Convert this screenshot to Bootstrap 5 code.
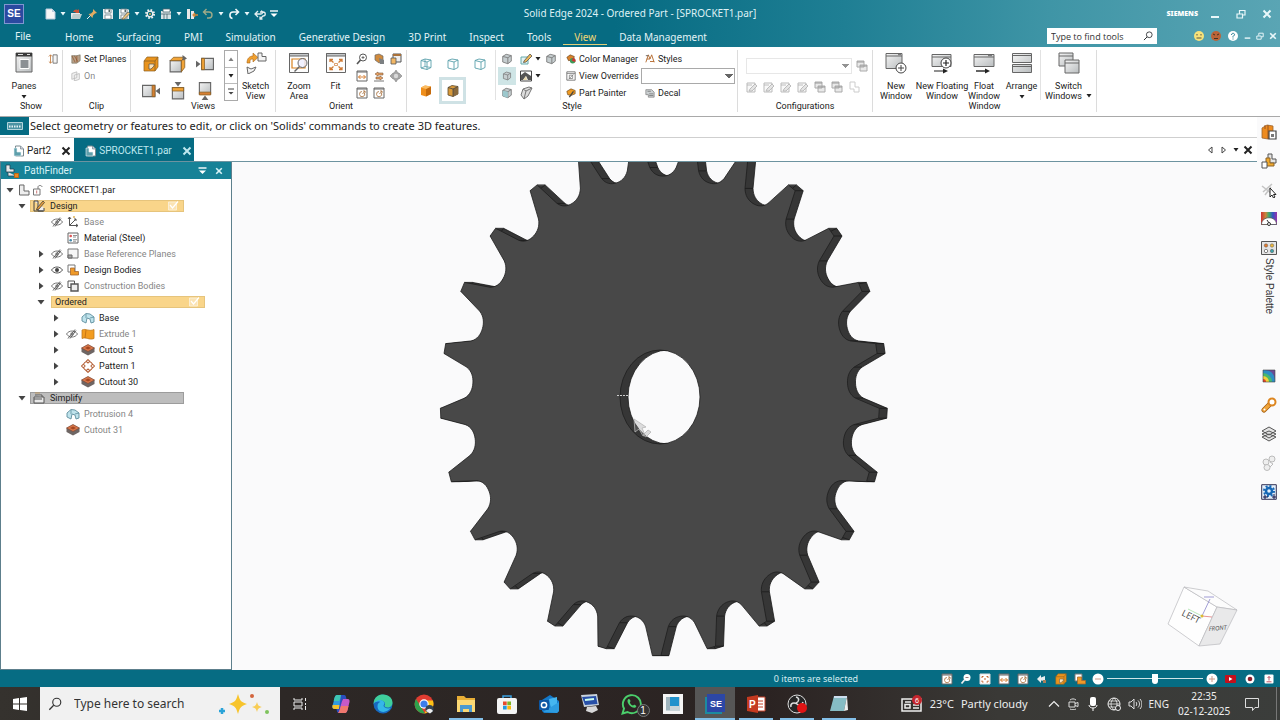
<!DOCTYPE html>
<html lang="en">
<head>
<meta charset="utf-8">
<meta name="viewport" content="width=device-width, initial-scale=1">
<title>Solid Edge 2024 - Ordered Part - [SPROCKET1.par]</title>
<link href="https://cdn.jsdelivr.net/npm/bootstrap@5.3.0/dist/css/bootstrap.min.css" rel="stylesheet">
<style>
:root{--teal:#066c83;--teal2:#178297;--line:#dcdcdc}
body{font-family:Roboto,"Open Sans",sans-serif;font-size:9px;line-height:12px;color:#222;background:#fff;height:100vh;overflow:hidden}
button{background:none;border:0;padding:0;color:inherit;font:inherit}
svg{display:block;flex:none}
.i10{width:10px;height:10px}.i12{width:12px;height:12px}.i14{width:14px;height:14px}.i16{width:16px;height:16px}.i18{width:18px;height:18px}.i22{width:22px;height:22px}
.dd{width:6px;height:4px}
.min0{min-width:0;min-height:0}
/* title and menu */
.app-head{background:linear-gradient(90deg,#066b82 0 48%,#1f7f94 66%,#3f95a6 82%,#5aa5b4);color:#e9f7fa;font-family:"Noto Sans",sans-serif}
.title-row{display:grid;grid-template-columns:1fr auto 1fr;height:26px}
.title-text{font-size:10px;line-height:27px;color:#dff1f5}
.se-logo{width:20px;height:20px;background:#2b4aa0;border:1px solid #7f97cf;color:#fff;font:bold 10px/18px "Liberation Sans",sans-serif}
.qat{gap:4px}
.siemens{font:900 7px/12px "Noto Sans",sans-serif;color:#fff;margin-right:-4px}
.menu-row{height:21px;font-size:10px}
.menu-nav{gap:23px;padding-left:15px}
.menu-row .nav-link{padding:0;color:#e3f4f7;line-height:23px}
.menu-row .file{margin-right:11px;line-height:21px}
.menu-row .active{color:#f2d675;border-bottom:1px solid #e3cf77;padding:0 11px;margin:0 -11px;height:19px}
.find-box{width:110px;height:16px;background:#fff;margin-top:2px}
.find-box input,.task-find input{font:inherit;color:#333;border:0;background:none;padding:0;min-width:0;outline:0}
.find-box input::placeholder,.task-find input::placeholder{color:#333;opacity:1}
.find-box input{font:9px "Open Sans",sans-serif}
.head-tools{gap:5px;padding:0 3px 2px 36px}
/* ribbon */
.ribbon{display:grid;grid-template-columns:63px 68px 145px 131px 331px 135px 224px;height:70px;padding-top:3px;border-bottom:1px solid #a9a9a9}
.rg{display:grid;grid-template-rows:50px 12px;height:62px;border-right:1px solid var(--line)}
.rg>.cap{text-align:center}
.rg>.rbody{display:flex;min-width:0}
.big{display:flex;flex-direction:column;align-items:center;text-align:center;line-height:10px;padding-top:2px;white-space:nowrap}
.big svg:first-child{margin-bottom:7px}
.lbl{display:flex;align-items:center;gap:3px;height:17px;white-space:nowrap;color:#222}
.g3{display:grid;grid-template-columns:repeat(3,27px);grid-template-rows:27px 27px;place-items:center}
.s3{display:grid;grid-template-columns:repeat(3,17px);grid-template-rows:repeat(3,17px);place-items:center}
.views3{margin-left:6px}.spin{width:14px;height:51px;border:1px solid #aaa;margin-left:6px}
.spin button{flex:1;display:flex;align-items:center;justify-content:center}
.spin button+button{border-top:1px solid #bbb}
.flip{transform:scaleY(-1)}
.sel{background:#cfe5e6}
.selbox{border:3px solid #cfe2e5;width:27px;height:27px;display:flex;align-items:center;justify-content:center}
.combo{width:100%;height:16px;border:1px solid #a9a9a9;background:#fff;font-size:9px;appearance:none;background-image:linear-gradient(45deg,transparent 50%,#666 50%),linear-gradient(-45deg,transparent 50%,#666 50%);background-size:4px 4px;background-position:right 5px top 5px,right 1px top 5px;background-repeat:no-repeat}
.combo.off{border-color:#ddd;opacity:.7}
.sep{border-right:1px solid #e2e2e2}
.panes{width:48px}.w46{width:46px}.w24{width:27px}.wfl{width:38px}
.box-c{padding:0 2px 0 5px}
.s3b{grid-template-columns:22px 15px 9px 18px}
.stylegrid{display:grid;grid-template-columns:75px 94px;grid-template-rows:repeat(3,17px);align-items:center;padding-left:5px}
.cfrow{gap:5px;padding-top:7px}
/* prompt and doc tabs */
.prompt{height:21px;border-bottom:1px solid #cfcfcf;font:11px/18px "Noto Sans",sans-serif;color:#222}
.prompt .tag{width:29px;height:18px;background:var(--teal)}
.ptxt{padding-left:1px}
.doc-tabs{height:24px;font-size:10px;border-bottom:1px solid #6d93a0}
.doc-tabs .tb{display:flex;align-items:center;height:23px;padding:2px 3px 0 13px;color:#222;gap:2px}
.doc-tabs .tb svg:last-child{margin-left:8px}
.doc-tabs .on{background:var(--teal);color:#bfe8ef;padding:2px 2px 0 11px}
/* PathFinder */
.finder{width:232px;border:1px solid #5d7f8c;border-top:0;background:#fff}
.finder-head{background:var(--teal2);height:17px;color:#d8f3f7;font-size:10px;line-height:16px}
.tree{padding-top:3px}
.tree li{display:flex;align-items:center;height:16px;padding-left:32px;white-space:nowrap}
.tree .s{width:16px;display:flex;justify-content:center;flex:none}
.tree .t{margin-left:3px}
.tree .dim{color:#858585}
.tree .kid{padding-left:47px}
.tree .root{padding-left:2px}.tree .root .s{width:14px}.tree .root .t{margin-left:5px}.tree .l1{padding-left:13px}
.band{background:#f9d58a;border:1px solid #e6c47c;height:12px;display:flex;align-items:center;width:154px;line-height:10px}
.band.ord{margin-left:2px}
.band.grey{background:#bdbdbd;border-color:#9c9c9c}
.view-area{background:#fafafb;min-width:0}
.dock{width:23px;background:#fafafb;color:#333;padding-top:1px}
.dock button{display:flex;flex-direction:column;align-items:center;padding-top:6px;min-height:29px;width:23px}
.dock span{writing-mode:vertical-rl;font:10px/12px "Liberation Sans",sans-serif;margin-top:2px}
/* status bar */
.status{background:var(--teal);height:17px;color:#d5edf1;font-size:9px}
.stxt{margin-right:83px}.sicons{gap:7px;margin-right:6px}.send{gap:9px;margin:0 2px 0 6px;align-items:center}
.status .stxt{font-family:"Noto Sans",sans-serif}
.status .zoom{width:96px;height:12px;appearance:none;background:linear-gradient(#cfe4e8,#cfe4e8) center/100% 1px no-repeat;margin:0 3px}
.zoom::-webkit-slider-thumb{appearance:none;width:6px;height:10px;background:#fff;border-radius:0 0 3px 3px}
/* task bar */
.tasks{height:33px;background:linear-gradient(90deg,#35322e 0,#2d2826 22%,#2b2322 60%,#3a3936 78%,#3b3d3b);color:#eee;font-family:"Noto Sans",sans-serif}
.startb{width:40px}
.task-find{width:240px;background:#f1f1f1;font-size:12px;color:#333}
.task-find input{width:144px}
.apps{width:579px}
.apps button{width:40px;height:33px;display:flex;align-items:center;justify-content:center;position:relative}
.apps .open::after{content:"";position:absolute;left:3px;right:3px;bottom:0;height:2px;background:#83bfe8}
.apps .cur{background:#565656}.apps .cur::after{left:0;right:0}
.apps .ct{position:absolute;right:2px;bottom:3px;width:13px;height:13px;border-radius:50%;background:#333;border:1px solid #777;font:10px/11px "Liberation Sans",sans-serif;color:#fff}
.wx{font-size:11px;gap:7px}
.tray{font-size:10px;gap:7px;margin:0 9px 0 20px}
.clock{font-size:10px;line-height:15px;width:52px;white-space:nowrap}
.note{margin:0 17px 0 15px}.desk{border-left:1px solid #777;width:4px}
</style>
</head>
<body class="d-flex flex-column">
<svg width="0" height="0" class="position-absolute" aria-hidden="true"><defs>
<linearGradient id="gw" x1="0" y1="0" x2="1" y2="1"><stop offset="0" stop-color="#f4f4f4"/><stop offset="1" stop-color="#b9bdbf"/></linearGradient>
<linearGradient id="rb" x1="0" y1="0" x2="1" y2="0"><stop offset="0" stop-color="#c33"/><stop offset=".3" stop-color="#c8883c"/><stop offset=".5" stop-color="#39a96e"/><stop offset=".75" stop-color="#3450c4"/><stop offset="1" stop-color="#93a"/></linearGradient>
<symbol id="dd" viewBox="0 0 6 4"><path d="M.5 0h5L3 3.500z" fill="currentColor"/></symbol>
<symbol id="rt" viewBox="0 0 10 10"><path d="M3 1.500l4.500 3.500L3 8.500z" fill="#444"/></symbol>
<symbol id="dn" viewBox="0 0 10 10"><path d="M1.500 3h7L5 7.500z" fill="#444"/></symbol>
<symbol id="x" viewBox="0 0 10 10"><path d="M1.500 1.500l7 7m0-7l-7 7" stroke="currentColor" stroke-width="2"/></symbol>
<symbol id="min" viewBox="0 0 10 10"><path d="M1 8h8" stroke="currentColor" stroke-width="2"/></symbol>
<symbol id="rest" viewBox="0 0 10 10"><path d="M1 5h5.500v4H1zM3.500 4.500V1.500H9v4.500H7" fill="none" stroke="currentColor" stroke-width="1.200"/></symbol>
<symbol id="mag" viewBox="0 0 16 16"><circle cx="10" cy="6" r="4.600" fill="none" stroke="currentColor" stroke-width="1.300"/><path d="M6.500 9.500L1.500 14.500" stroke="currentColor" stroke-width="1.500"/></symbol>
<symbol id="doc" viewBox="0 0 12 12"><path d="M2 1h6l3 3v7H2z" fill="#f6f6f6" stroke="#bcd"/><path d="M8 1v3h3" fill="#bcd"/></symbol>
<symbol id="pdoc" viewBox="0 0 12 12"><path d="M2.500 1h5l3 3v7h-8z" fill="#fff" stroke="#78888e"/><path d="M7.500 1v3h3" fill="#ccd" stroke="#78888e" stroke-width=".7"/><path d="M1 3h3v4h4v4H1z" fill="#5e9fab" stroke="#e8f4f6" stroke-width=".6"/></symbol>
<symbol id="open" viewBox="0 0 12 12"><path d="M1 5h9v6H1z" fill="#e8e8e8"/><path d="M1 11l2-5h9l-2 5z" fill="#bcc"/><path d="M3 4c1-3 4-3 5-2l1-1v4H5l1-1z" fill="#c8553a"/></symbol>
<symbol id="pin" viewBox="0 0 12 12"><path d="M7 1l4 4-2 .5-2 2L6.500 10 2.500 6 5 5.500l2-2z" fill="#e4ac62"/><path d="M4.500 7.500L1 11" stroke="#eee"/></symbol>
<symbol id="save" viewBox="0 0 12 12"><path d="M1 1h9l1 1v9H1z" fill="#e8eef0"/><path d="M3 1h6v4H3zM3 7h6v4H3z" fill="#fff" stroke="#6e8289" stroke-width=".8"/><path d="M6.500 1.500h1.500v2.500H6.500z" fill="#566"/></symbol>
<symbol id="savas" viewBox="0 0 12 12"><use href="#save"/><path d="M4.500 10L10 4l2 1.500-5.500 5.500-2.500.5z" fill="#efc77c" stroke="#444" stroke-width=".6"/></symbol>
<symbol id="gear" viewBox="0 0 12 12"><circle cx="6" cy="6" r="4" fill="none" stroke="#f1f1f1" stroke-width="2" stroke-dasharray="1.600 1.550"/><circle cx="6" cy="6" r="2.800" fill="none" stroke="#f1f1f1" stroke-width="1.300"/><circle cx="6" cy="6" r="1" fill="#e7ae4b"/></symbol>
<symbol id="panel" viewBox="0 0 12 12"><path d="M1 3h10v8H1z" fill="#d9e3e6"/><path d="M3 1h7v3H3zM1 6h10M4 6v5M7 6v5" stroke="#49656e" fill="#fff" stroke-width=".8"/></symbol>
<symbol id="exit" viewBox="0 0 12 12"><path d="M1 1h3v10H1zM5 3h3v8H5z" fill="#e8e8e8"/><path d="M12 7H7m2-2L7 7l2 2" stroke="#d68a3c" fill="none" stroke-width="1.300"/></symbol>
<symbol id="undo" viewBox="0 0 12 12"><path d="M4.500 1L1.500 4l3 3M2 4h5c4 0 4 6 0 6H5" fill="none" stroke="#a0aa88" stroke-width="1.400"/></symbol>
<symbol id="redo" viewBox="0 0 12 12"><path d="M7.500 1l3 3-3 3M10 4H5C1 4 1 10 4.500 10.500" fill="none" stroke="#eef6f8" stroke-width="1.600"/></symbol>
<symbol id="loop" viewBox="0 0 12 12"><path d="M4 3L1 6l3 3M1.500 6H7c2 0 2-3 0-3M6 4h3c3 0 3 4 0 4l-3 3M6 8.500V11h2.500" fill="none" stroke="#e4eef0" stroke-width="1.300"/></symbol>
<symbol id="cust" viewBox="0 0 8 8"><path d="M0 1h8" stroke="#fff" stroke-width="1.400"/><path d="M.5 3.500h7L4 7z" fill="#fff"/></symbol>
<symbol id="more" viewBox="0 0 8 8"><path d="M1 1h6" stroke="#444"/><path d="M1.500 4h5L4 6.500z" fill="#444"/></symbol>
<symbol id="panes" viewBox="0 0 22 22"><path d="M3 1h16v19H3z" fill="url(#gw)" stroke="#666"/><path d="M3 1h16v3.500H3z" fill="#3a3a3a"/><path d="M5 2.500h5M14 2.500h3" stroke="#ddd"/><path d="M7 7.500h9v9H7z" fill="#8b9094" stroke="#fff"/></symbol>
<symbol id="win" viewBox="0 0 22 22"><path d="M1.500 1.500h19v19h-19z" fill="#fdfdfd" stroke="#666"/><path d="M1.500 1.500h19v2.500h-19z" fill="#c5c8ca" stroke="#666"/></symbol>
<symbol id="zarea" viewBox="0 0 22 22"><use href="#win"/><path d="M4 7h13v9H4z" fill="#fff" stroke="#d9821e" stroke-width="1.200"/><circle cx="14.500" cy="11" r="4.500" fill="#eef" fill-opacity=".8" stroke="#666"/><path d="M11.500 14.500L6.500 19.500" stroke="#666" stroke-width="1.500"/></symbol>
<symbol id="fit" viewBox="0 0 22 22"><use href="#win"/><path d="M5 10V7.500h3M14 7.500h3V10M17 15v2.500h-3M8 17.500H5V15M5 7.500l3.500 3M17 7.500l-3.500 3M17 17.500l-3.500-3M5 17.500l3.500-3" fill="none" stroke="#cf7a35" stroke-width="1.300"/><path d="M9.500 11.500h3v2h-3z" fill="none" stroke="#cf7a35" stroke-width=".7"/></symbol>
<symbol id="nw" viewBox="0 0 22 22"><path d="M1 1.500h16v15H1z" fill="url(#gw)" stroke="#666"/><path d="M1 4h16M13 2.700h3" stroke="#666"/><circle cx="16" cy="16" r="5" fill="#fff" stroke="#444"/><path d="M16 13v6M13 16h6" stroke="#444"/></symbol>
<symbol id="nfw" viewBox="0 0 22 22"><path d="M1 2.500h19v12H1z" fill="url(#gw)" stroke="#666"/><path d="M1 5h19" stroke="#666"/><circle cx="15" cy="11" r="5" fill="#fff" stroke="#444"/><path d="M15 8v6M12 11h6M3 19h11" stroke="#222" stroke-width="1.200"/><path d="M12 16.500l5 2.500-5 2.500z" fill="#222"/></symbol>
<symbol id="fw" viewBox="0 0 22 22"><path d="M1 2.500h20v12H1z" fill="url(#gw)" stroke="#666"/><path d="M1 5h20M15 3.700h4" stroke="#666"/><path d="M3 19h10" stroke="#222" stroke-width="1.400"/><path d="M12 16.500l5 2.500-5 2.500z" fill="#222"/></symbol>
<symbol id="arr" viewBox="0 0 22 22"><path d="M1.500 1.500h19v9h-19zM1.500 12.500h19v8h-19z" fill="url(#gw)" stroke="#666"/><path d="M1 3.500h20M1 14.500h20" stroke="#666"/></symbol>
<symbol id="sw" viewBox="0 0 22 22"><path d="M1 1h14v13H1z" fill="url(#gw)" stroke="#666"/><path d="M1 4h14" stroke="#666"/><path d="M7 8h14v13H7z" fill="url(#gw)" stroke="#666"/><path d="M7 11h14" stroke="#666"/></symbol>
<symbol id="skv" viewBox="0 0 22 22"><path d="M2 11C2 6 5 4 8 4V1l5 4.500L8 10V7c-3 0-3 1-3 4z" fill="#f0a030" stroke="#a8641a" stroke-width=".6"/><path d="M13 1h4v3.500h4V9h-8zM2 15l4 2 5-2-2 4-6 3z" fill="#f4f4f4" stroke="#666"/></symbol>
<symbol id="cubeo" viewBox="0 0 14 14"><path d="M2 3.500L6 1.500l6 1V10L7 12.500l-5-1.500z" fill="#ef8f1c"/><path d="M7 5l5-2.500V10L7 12.500z" fill="#c46a0c"/><path d="M2 3.500l4-2 6 1L7 5z" fill="#fbbc62"/></symbol>
<symbol id="cubeoe" viewBox="0 0 14 14"><path d="M2 3.500L6 1.500l6 1V10L7 12.500l-5-1.500z" fill="#d99a3a" stroke="#5a4a30" stroke-width=".8"/><path d="M7 5l5-2.500V10L7 12.500z" fill="#8a6a3c"/><path d="M2 3.500L7 5v7.500M7 5l5-2.500" fill="none" stroke="#444" stroke-width=".8"/></symbol>
<symbol id="cubew" viewBox="0 0 14 14"><path d="M2 3.500l4-1.500 6 1v7.500L8 12.500l-6-1.500zM2 3.500l6 1.500v7.500M8 5l4-2" fill="#fff" stroke="#5aa0ac" stroke-width=".9"/></symbol>
<symbol id="cubew2" viewBox="0 0 14 14"><use href="#cubew"/><path d="M6 2v7.500l6 1M6 9.500L2 11" fill="none" stroke="#5aa0ac" stroke-width=".8"/></symbol>
<symbol id="cubeg" viewBox="0 0 14 14"><path d="M2 4l4-2.500 6 1.500v6.500L8 12.500l-6-2z" fill="#c6ced0" stroke="#777"/><path d="M2 4l6 1.500 4-2.500M8 5.500v7" stroke="#777" fill="none"/></symbol>
<symbol id="cubet" viewBox="0 0 14 14"><use href="#cubeg"/><path d="M2 4l6 1.500v7l-6-2z" fill="#9cc8cd"/></symbol>
<symbol id="pencube" viewBox="0 0 14 14"><path d="M2 5h7v7H2z" fill="#e3f2f3" stroke="#6aa"/><path d="M5 9l6-7 2 2-6 6-2.500.5z" fill="#edb95a" stroke="#444" stroke-width=".7"/></symbol>
<symbol id="scene" viewBox="0 0 14 14"><path d="M1.500 2h11v10h-11z" fill="#fff" stroke="#444"/><path d="M2 6l4-3 6 4v4H9L7 7l-3 4H2z" fill="#555"/><path d="M4 11l3-4 1 4z" fill="#e7d8ae"/></symbol>
<symbol id="pcube" viewBox="0 0 14 14"><path d="M4 3l6-2 3 1-4 8-4 3-3-4z" fill="#dcdcdc" stroke="#777"/><path d="M4 3l3 2-2 8M7 5l6-3" stroke="#777" fill="none"/></symbol>
<symbol id="v1" viewBox="0 0 16 16"><path d="M4 1h11v10l-3 4H1V5z" fill="#e9931c" stroke="#8b6023" stroke-width=".7"/><path d="M1 5h11v10M12 5l3-4" fill="none" stroke="#8b6023" stroke-width=".8"/><path d="M6 8h5v2L8 13H6z" fill="#fce3b8" stroke="#555" stroke-width=".7"/></symbol>
<symbol id="v2" viewBox="0 0 16 16"><path d="M1 5h10v10H1z" fill="url(#gw)" stroke="#666"/><path d="M1 5l3-3h10l-3 3zM11 5l3-3v9l-3 4z" fill="#f2a437" stroke="#8b6023" stroke-width=".7"/><path d="M12 0l4 3-4 2z" fill="#666"/></symbol>
<symbol id="v3" viewBox="0 0 16 16"><path d="M5 3h10.500v10H5z" fill="url(#gw)" stroke="#666"/><path d="M5 3h2.500v10H5z" fill="#f2a437" stroke="#8b6023" stroke-width=".7"/><path d="M0 5l4 3-4 3z" fill="#666"/></symbol>
<symbol id="v4" viewBox="0 0 16 16"><path d="M.5 3h11v10h-11z" fill="url(#gw)" stroke="#666"/><path d="M9 3h2.500v10H9z" fill="#d77f33" stroke="#8b6023" stroke-width=".7"/><path d="M16 5l-4 3 4 3z" fill="#666"/></symbol>
<symbol id="v5" viewBox="0 0 16 16"><path d="M3 5h10v10H3z" fill="url(#gw)" stroke="#666"/><path d="M3 5h10v3H3z" fill="#f2a437" stroke="#8b6023" stroke-width=".7"/><path d="M5 0h6L8 4z" fill="#666"/></symbol>
<symbol id="v6" viewBox="0 0 16 16"><path d="M3 .5h10v10H3z" fill="url(#gw)" stroke="#666"/><path d="M3 9h10v2.500H3z" fill="#d77f33" stroke="#8b6023" stroke-width=".7"/><path d="M5 16h6L8 12z" fill="#666"/></symbol>
<symbol id="zm" viewBox="0 0 12 12"><circle cx="7" cy="4.500" r="3.500" fill="#fff" stroke="#555"/><path d="M4.500 7L1 11" stroke="#555" stroke-width="1.600"/><path d="M5.500 4.500h3M7 3v3" stroke="#555" stroke-width=".8"/></symbol>
<symbol id="zmw" viewBox="0 0 12 12"><circle cx="7" cy="4.500" r="3.500" fill="#fff"/><path d="M4.500 7L1.500 10.500" stroke="#eee" stroke-width="1.800"/><path d="M5.500 4.500h3" stroke="#977"/></symbol>
<symbol id="rot" viewBox="0 0 12 12"><path d="M2 2l4-1 4 2v5l-4 2-4-3z" fill="#d08a3c" stroke="#666" stroke-width=".7"/><path d="M6 5l5 2v4H7z" fill="#7c8082"/></symbol>
<symbol id="lk" viewBox="0 0 12 12"><path d="M3 1h8v8H3z" fill="#eee" stroke="#555"/><path d="M3 1h8v2H3z" fill="#a9713a"/><path d="M1 5h5v6H1z" fill="#f2b765" stroke="#555" stroke-width=".8"/></symbol>
<symbol id="pan" viewBox="0 0 12 12"><path d="M1 1h10v10H1z" fill="#fff" stroke="#666"/><path d="M1 2h10" stroke="#666"/><path d="M2.500 7h7M4.500 5l-2 2 2 2M7.500 5l2 2-2 2" fill="none" stroke="#d2731f" stroke-width=".9"/></symbol>
<symbol id="fits" viewBox="0 0 12 12"><path d="M1 1h10v10H1z" fill="#fff" stroke="#ddd"/><path d="M3 5V3.500h1.500M7.500 3.500H9V5M9 7.500V9H7.500M4.500 9H3V7.500M5 6h2" fill="none" stroke="#c2662f"/></symbol>
<symbol id="spinv" viewBox="0 0 12 12"><path d="M2 4l3-2v1h5v2H5v1zM10 8L7 6v1H3v2h4v1z" fill="#e9a062" stroke="#7d5a3c" stroke-width=".6"/><path d="M1 11h10" stroke="#777"/></symbol>
<symbol id="look" viewBox="0 0 12 12"><path d="M1 6l4-4v2.500L9 3v5L5 7.500V10z" fill="#e8eef0"/><path d="M7 7h3v3H7z" fill="#a9805a"/></symbol>
<symbol id="pt4" viewBox="0 0 12 12"><path d="M6 0l2 3h1l3 3-3 3H8l-2 3-2-3H3L0 6l3-3h1z" fill="#a6a6a6" stroke="#777" stroke-width=".5"/><circle cx="6" cy="6" r="2.200" fill="#d9d9d9"/></symbol>
<symbol id="pv" viewBox="0 0 12 12"><path d="M1 1h10v10H1z" fill="#fff" stroke="#666"/><path d="M1 2h10" stroke="#666"/><path d="M8.500 6A2.600 2.600 0 116 4.500M6.500 7L9 4M9 6V4H7" fill="none" stroke="#b07a4a" stroke-width=".9"/></symbol>
<symbol id="sp" viewBox="0 0 12 12"><path d="M1 2h6l4-1v7l-4 3H1z" fill="#b8a089" stroke="#776" stroke-width=".8"/><path d="M1 2l4 8M4 2l4 7M7 2v8" stroke="#8e4f22" stroke-width=".8"/></symbol>
<symbol id="onp" viewBox="0 0 12 12"><path d="M1 3l6-2v7l-6 2zM4 5l6-2v7l-6 2z" fill="#f1f1f1" stroke="#bcbcbc"/></symbol>
<symbol id="dim" viewBox="0 0 12 12"><path d="M6 1h5v10H6z" fill="#f5f5f5" stroke="#666"/><path d="M3 1v10M1 3l2-2 2 2M1 9l2 2 2-2" fill="none" stroke="#c27a3a"/></symbol>
<symbol id="cm" viewBox="0 0 12 12"><path d="M1 4l4-3 5 2-1 4-6 1z" fill="#d9822b" stroke="#5a3a1a" stroke-width=".7"/><circle cx="8" cy="8" r="3.300" fill="#3f9a58"/><path d="M8 4.700a3.300 3.300 0 013 5L7 8z" fill="#c33"/></symbol>
<symbol id="vo" viewBox="0 0 12 12"><path d="M1 1h10v10H1z" fill="#fff" stroke="#666"/><path d="M1 3h10M4 5h4v4H4zM3 10l6-6" stroke="#777" fill="none" stroke-width=".9"/></symbol>
<symbol id="pp" viewBox="0 0 12 12"><path d="M1 4l5-3 5 2v4L6 9 2 8z" fill="#ef9b22" stroke="#5a3a1a" stroke-width=".7"/><path d="M9 4L4 11" stroke="#444" stroke-width="1.600"/></symbol>
<symbol id="st" viewBox="0 0 12 12"><path d="M1 10L4 1l2 5 2-5 3 9M2 6h4M6 9h5" fill="none" stroke="#b5692d" stroke-width="1.100"/><path d="M1 2h3" stroke="#555"/></symbol>
<symbol id="dc" viewBox="0 0 12 12"><path d="M1 2h7l3 3v6H4V8H1z" fill="#cbd0d2" stroke="#777" stroke-width=".8"/><path d="M3 4h4M5 7h5M5 9h5" stroke="#666" stroke-width=".8"/></symbol>
<symbol id="cf" viewBox="0 0 12 12"><path d="M1 2h8v9H1z" fill="#f8f8f8" stroke="#bbb"/><path d="M4 8l5-5 2 2-5 5H3zM1 4h5" fill="#e4e4e4" stroke="#b0b0b0" stroke-width=".8"/></symbol>
<symbol id="cf2" viewBox="0 0 12 12"><path d="M1 1h7v6H1zM4 5h7v6H4z" fill="#e9e9e9" stroke="#aaa"/><path d="M4 6h7M1 2h7" stroke="#999"/></symbol>
<symbol id="cf3" viewBox="0 0 12 12"><path d="M2 1h5v5h4v5H6V8H2z" fill="none" stroke="#ccc"/></symbol>
<symbol id="part" viewBox="0 0 12 12"><path d="M1.500 1H6v6h5v4H1.500z" fill="#eee" stroke="#666"/></symbol>
<symbol id="lock" viewBox="0 0 12 12"><path d="M1.500 5H8v6H1.500z" fill="#fff" stroke="#777"/><path d="M6 5V3c0-2 4-2 4 0" fill="none" stroke="#777"/><path d="M4.700 6.500v3" stroke="#c77"/></symbol>
<symbol id="sk" viewBox="0 0 12 12"><path d="M1 1h4v10h6V8" fill="#eee" stroke="#444"/><path d="M1 1v10h9" fill="none" stroke="#444"/><path d="M4 8l6-7 1.500 1.500L6 9 3.500 10z" fill="#e49c3d" stroke="#333" stroke-width=".7"/></symbol>
<symbol id="eye" viewBox="0 0 12 12"><path d="M.5 6C3 2 9 2 11.500 6 9 10 3 10 .5 6z" fill="#fff" stroke="#555"/><circle cx="6" cy="6" r="2" fill="#444"/></symbol>
<symbol id="noeye" viewBox="0 0 12 12"><path d="M.5 6C3 2 9 2 11.500 6 9 10 3 10 .5 6z" fill="#fff" stroke="#777"/><circle cx="6" cy="6" r="1.800" fill="#999"/><path d="M2 10.500l7-9M4 10.500l6-8" stroke="#555" stroke-width=".9"/></symbol>
<symbol id="ax" viewBox="0 0 12 12"><path d="M2.500 1v8.500H11M2.500 9.500L9 3M1 3l1.500-2L4 3M9 8l2 1.500L9 11M7 3h2v2" fill="none" stroke="#555"/><path d="M6 1h2" stroke="#c80"/></symbol>
<symbol id="mat" viewBox="0 0 12 12"><path d="M1 1h10v10H1z" fill="#fff" stroke="#666"/><circle cx="3.700" cy="4" r="1.300" fill="#d55"/><circle cx="3.700" cy="8.200" r="1.300" fill="#48a"/><path d="M6 3.500h4M6 5h3M6 7.700h4M6 9.200h3" stroke="#777" stroke-width=".8"/></symbol>
<symbol id="pl" viewBox="0 0 12 12"><path d="M1 1h10v9H1z" fill="#f7f7f7" stroke="#777"/><path d="M1 7h4v3H1z" fill="#aaa" stroke="#666"/></symbol>
<symbol id="bod" viewBox="0 0 12 12"><path d="M1 1h7v7H1z" fill="#fff" stroke="#777"/><path d="M3.500 4h4v3.500h4V11h-8z" fill="#ef9a28" stroke="#a8682c" stroke-width=".8"/></symbol>
<symbol id="cbod" viewBox="0 0 12 12"><path d="M1 1h6.500v6.500H1z" fill="#fff" stroke="#555"/><path d="M4 4h7v7H4z" fill="#eee" stroke="#555" stroke-width="1.400"/></symbol>
<symbol id="prot" viewBox="0 0 14 12"><path d="M1 5l4-3.500 4 .5 4 3v5l-3 1-1-4-3-1-1 5-4-2z" fill="#bfe3ec" stroke="#5f8f9e" stroke-width=".9"/><path d="M5 6V2M9 6l4-1" stroke="#5f8f9e" stroke-width=".8"/></symbol>
<symbol id="ext" viewBox="0 0 14 12"><path d="M1 2c4-2 7 2 12-.5v9c-5 2-8-2-12 0z" fill="#f29c1f" stroke="#c07a1c" stroke-width=".8"/><path d="M5 2l-1 8" stroke="#c87612"/></symbol>
<symbol id="cut" viewBox="0 0 14 12"><path d="M.5 4L7 .5 13.500 4v4L7 11.500.5 8z" fill="#6e6664"/><path d="M.5 4L7 .5 13.500 4 7 7.500z" fill="#d9774a" stroke="#7b4431" stroke-width=".6"/><path d="M4 4l3-1.600L10 4 7 5.500z" fill="#a54721"/></symbol>
<symbol id="pat" viewBox="0 0 12 12"><circle cx="6" cy="6" r="4" fill="none" stroke="#b5623a"/><path d="M6 .5L7.500 2 6 3.500 4.500 2zM6 8.500L7.500 10 6 11.500 4.500 10zM2 4.500L3.500 6 2 7.500.5 6zM10 4.500L11.500 6 10 7.500 8.500 6z" fill="#fff" stroke="#b5623a" stroke-width=".9"/></symbol>
<symbol id="simp" viewBox="0 0 12 12"><path d="M1 5h10v6H1zM2 3h7v2" fill="#e8e8e8" stroke="#555"/><path d="M1 7h8" stroke="#555"/><path d="M2 1h5" stroke="#b96"/></symbol>
<symbol id="chk" viewBox="0 0 12 12"><path d="M1.500 2h8v8h-8z" fill="#fbe3b3" stroke="#fbf3df" stroke-width=".8"/><path d="M3 5l2.500 3L11 1.500" fill="none" stroke="#fff" stroke-width="1.200"/></symbol>
<symbol id="d1" viewBox="0 0 16 16"><path d="M1 4l5-3 6 1v11l-5 2-6-1z" fill="#ed8b1f" stroke="#9a6430" stroke-width=".8"/><path d="M4 1v4M7 1v14" stroke="#9a5420"/><path d="M8 7h7v8H8z" fill="#fff" stroke="#444" stroke-width="1.200"/><path d="M10 10h3v3h-3z" fill="#777"/></symbol>
<symbol id="d2" viewBox="0 0 16 16"><path d="M7 1h4v5h4v4H7z" fill="#e4e4e4" stroke="#555"/><path d="M5 5h4v5h4v3H5z" fill="#f0a92d" stroke="#8b6328"/><path d="M1 9h5v6H1z" fill="#fff" stroke="#555"/></symbol>
<symbol id="d3" viewBox="0 0 16 16"><path d="M1 4l10 8M2 10l9-8M4 13l6-8" stroke="#c4c4c4" stroke-width="1.500"/><path d="M9 6v9l2-2 1.500 3 1.500-1-1.500-2.500H15z" fill="#fff" stroke="#222"/></symbol>
<symbol id="d4" viewBox="0 0 16 16"><path d="M0 1h16v13H0z" fill="url(#rb)"/><path d="M.5 13.500c0-9 15-9 15 0z" fill="#fff" stroke="#555" stroke-width=".8"/><path d="M8 12L6 9" stroke="#333"/><circle cx="8" cy="13" r="1.500" fill="#fff" stroke="#333"/></symbol>
<symbol id="d5" viewBox="0 0 16 16"><path d="M.5 1.500h15v13H.5z" fill="#e5e5e5" stroke="#555"/><circle cx="5" cy="5.500" r="1.700" fill="#e67b2a" stroke="#555" stroke-width=".5"/><circle cx="11" cy="5.500" r="1.700" fill="#f0b93a" stroke="#555" stroke-width=".5"/><circle cx="5" cy="11" r="1.700" fill="#fff" stroke="#555" stroke-width=".7"/><circle cx="11" cy="11" r="1.700" fill="#3aa0a8" stroke="#555" stroke-width=".5"/></symbol>
<symbol id="d6" viewBox="0 0 16 16"><path d="M2 2h12v12H2z" fill="#6a4a95"/><path d="M2 2h2a10 10 0 0110 10v2H2z" fill="#2d8ec4"/><path d="M2 5a9 9 0 019 9H2z" fill="#4ab96c"/><path d="M2 8a6 6 0 016 6H2z" fill="#f2d23a"/><path d="M2 11a3 3 0 013 3H2z" fill="#e5402a"/><path d="M2 2h12v12H2z" fill="none" stroke="#444" stroke-width=".6"/></symbol>
<symbol id="d7" viewBox="0 0 16 16"><path d="M10 6L3 13" stroke="#a05c10" stroke-width="5" stroke-linecap="round"/><path d="M10 6L3 13" stroke="#f0a43a" stroke-width="3.500" stroke-linecap="round"/><circle cx="11" cy="5" r="3.500" fill="#fff" stroke="#dd8620" stroke-width="2"/><circle cx="3.500" cy="12.500" r="1" fill="#fff"/></symbol>
<symbol id="d8" viewBox="0 0 16 16"><path d="M1 11l7-3 7 3-7 4zM1 8l7-3 7 3-7 4zM1 5l7-4 7 4-7 4z" fill="#e4e4e4" stroke="#555"/></symbol>
<symbol id="d9" viewBox="0 0 16 16"><circle cx="11" cy="4" r="3" fill="#eee" stroke="#bbb"/><circle cx="5" cy="7" r="3" fill="#eee" stroke="#bbb"/><circle cx="6" cy="12.500" r="3" fill="#eee" stroke="#bbb"/><path d="M9 7l3 2-3 3" stroke="#bbb" fill="none"/></symbol>
<symbol id="d10" viewBox="0 0 16 16"><path d="M.7.700h14.600v14.600H.7z" fill="#e4effb" stroke="#335"/><circle cx="8" cy="7" r="3" fill="none" stroke="#1667b5" stroke-width="2.500"/><circle cx="8" cy="7" r="5" fill="none" stroke="#1667b5" stroke-width="2" stroke-dasharray="2 1.900"/><path d="M2 13h5M4 11v4M13 10v5M11 13h4" stroke="#114"/></symbol>
</defs></svg>

<header class="app-head flex-shrink-0">
 <div class="title-row">
  <div class="d-flex align-items-center qat ps-1">
   <div class="se-logo text-center me-3">SE</div>
   <button aria-label="New"><svg class="i12"><use href="#doc"/></svg></button><svg class="dd"><use href="#dd"/></svg>
   <button aria-label="Open"><svg class="i12"><use href="#open"/></svg></button>
   <button aria-label="Pin"><svg class="i12"><use href="#pin"/></svg></button>
   <button aria-label="Save"><svg class="i12"><use href="#save"/></svg></button>
   <button aria-label="Save as"><svg class="i12"><use href="#savas"/></svg></button><svg class="dd"><use href="#dd"/></svg>
   <button aria-label="Settings"><svg class="i12"><use href="#gear"/></svg></button>
   <button aria-label="Panels"><svg class="i12"><use href="#panel"/></svg></button><svg class="dd"><use href="#dd"/></svg>
   <button aria-label="Exit"><svg class="i12"><use href="#exit"/></svg></button>
   <button aria-label="Undo"><svg class="i12"><use href="#undo"/></svg></button><svg class="dd"><use href="#dd"/></svg>
   <button aria-label="Redo"><svg class="i12"><use href="#redo"/></svg></button><svg class="dd"><use href="#dd"/></svg>
   <button aria-label="Repeat"><svg class="i12"><use href="#loop"/></svg></button>
   <button aria-label="Customize"><svg width="8" height="8"><use href="#cust"/></svg></button>
  </div>
  <div class="title-text">Solid Edge 2024 - Ordered Part - [SPROCKET1.par]</div>
  <div class="d-flex align-items-center justify-content-end gap-3 pe-2">
   <span class="siemens">SIEMENS</span>
   <button aria-label="Minimize"><svg class="i10"><use href="#min"/></svg></button>
   <button aria-label="Restore"><svg class="i10"><use href="#rest"/></svg></button>
   <button aria-label="Close"><svg class="i10"><use href="#x"/></svg></button>
  </div>
 </div>
 <div class="menu-row d-flex">
  <nav class="nav menu-nav flex-nowrap">
   <a class="nav-link file" href="#">File</a><a class="nav-link" href="#">Home</a><a class="nav-link" href="#">Surfacing</a><a class="nav-link" href="#">PMI</a><a class="nav-link" href="#">Simulation</a><a class="nav-link" href="#">Generative Design</a><a class="nav-link" href="#">3D Print</a><a class="nav-link" href="#">Inspect</a><a class="nav-link" href="#">Tools</a><a class="nav-link active" href="#">View</a><a class="nav-link" href="#">Data Management</a>
  </nav>
  <div class="find-box d-flex align-items-center ms-auto ps-1 pe-1 text-dark"><input class="flex-grow-1" type="text" placeholder="Type to find tools" aria-label="Find tools"><svg class="i10"><use href="#mag"/></svg></div>
  <div class="d-flex align-items-center head-tools">
   <svg class="i12" viewBox="0 0 12 12"><circle cx="6" cy="6" r="5" fill="#f6e27a"/><path d="M4 4v1.500M8 4v1.500M3.500 8h5" stroke="#554" fill="none"/></svg>
   <svg class="i12" viewBox="0 0 12 12"><circle cx="6" cy="6" r="5" fill="#bb6438"/><path d="M3 4l2 1M9 4L7 5M4 8.500h4" stroke="#432" fill="none"/></svg>
   <svg class="i12" viewBox="0 0 12 12"><circle cx="6" cy="6" r="5" fill="#fff"/><path d="M4.500 5c0-2.500 3.500-2 3 0L6 6.500v1M6 8.500v1" stroke="#267e93" fill="none"/></svg>
   <svg width="7" height="8"><use href="#min"/></svg><svg width="8" height="8"><use href="#rest"/></svg><svg width="8" height="8"><use href="#x"/></svg>
  </div>
 </div>
</header>

<section class="ribbon flex-shrink-0">
 <div class="rg"><div class="rbody">
   <button class="big panes"><svg class="i22"><use href="#panes"/></svg>Panes<svg class="dd mt-1"><use href="#dd"/></svg></button>
   <button class="align-self-start pt-1" aria-label="Dimensions"><svg class="i10"><use href="#dim"/></svg></button></div><div class="cap">Show</div></div>
 <div class="rg"><div class="rbody flex-column ps-2"><button class="lbl"><svg class="i10"><use href="#sp"/></svg>Set Planes</button><button class="lbl text-black-50"><svg class="i10"><use href="#onp"/></svg>On</button></div><div class="cap">Clip</div></div>
 <div class="rg"><div class="rbody">
   <div class="g3 views3"><svg class="i16"><use href="#v1"/></svg><svg class="i18"><use href="#v2"/></svg><svg class="i18"><use href="#v3"/></svg><svg class="i18"><use href="#v4"/></svg><svg class="i18"><use href="#v5"/></svg><svg class="i18"><use href="#v6"/></svg></div>
   <div class="spin d-flex flex-column"><button aria-label="Up" class="text-black-50"><svg class="dd flip"><use href="#dd"/></svg></button><button aria-label="Down"><svg class="dd"><use href="#dd"/></svg></button><button aria-label="More"><svg width="8" height="8"><use href="#more"/></svg></button></div>
   <button class="big ms-1"><svg class="i22"><use href="#skv"/></svg>Sketch<br>View</button></div><div class="cap">Views</div></div>
 <div class="rg"><div class="rbody">
   <button class="big w46"><svg class="i22"><use href="#zarea"/></svg>Zoom<br>Area</button><button class="big w24"><svg class="i22"><use href="#fit"/></svg>Fit</button>
   <div class="s3 ms-1"><svg class="i12"><use href="#zm"/></svg><svg class="i12"><use href="#rot"/></svg><svg class="i12"><use href="#lk"/></svg><svg class="i12"><use href="#pan"/></svg><svg class="i12"><use href="#spinv"/></svg><svg class="i12"><use href="#pt4"/></svg><svg class="i12"><use href="#pv"/></svg><svg class="i12"><use href="#pv"/></svg></div></div><div class="cap">Orient</div></div>
 <div class="rg"><div class="rbody">
   <div class="g3 sep box-c"><svg class="i14"><use href="#cubew2"/></svg><svg class="i14"><use href="#cubew"/></svg><svg class="i14"><use href="#cubew"/></svg><svg class="i14"><use href="#cubeo"/></svg><div class="selbox"><svg class="i14"><use href="#cubeoe"/></svg></div></div>
   <div class="s3 sep s3b"><svg class="i12"><use href="#cubeg"/></svg><svg class="i14"><use href="#pencube"/></svg><svg class="dd"><use href="#dd"/></svg><svg class="i12"><use href="#cubeg"/></svg><div class="sel p-1"><svg class="i10"><use href="#cubeg"/></svg></div><svg class="i14"><use href="#scene"/></svg><svg class="dd"><use href="#dd"/></svg><i></i><svg class="i12"><use href="#cubet"/></svg><svg class="i14"><use href="#pcube"/></svg></div>
   <div class="stylegrid flex-grow-1">
    <button class="lbl"><svg class="i10"><use href="#cm"/></svg>Color Manager</button><button class="lbl ps-1"><svg class="i10"><use href="#st"/></svg>Styles</button>
    <button class="lbl"><svg class="i10"><use href="#vo"/></svg>View Overrides</button><select class="combo" aria-label="Style"></select>
    <button class="lbl"><svg class="i10"><use href="#pp"/></svg>Part Painter</button><button class="lbl ps-1"><svg class="i10"><use href="#dc"/></svg>Decal</button>
   </div></div><div class="cap">Style</div></div>
 <div class="rg"><div class="rbody flex-column ps-2 pe-1">
   <div class="d-flex align-items-center gap-1 pt-1 mt-1"><select class="combo off flex-grow-1" aria-label="Configuration" disabled></select><svg class="i12"><use href="#cf2"/></svg></div>
   <div class="d-flex cfrow"><svg class="i12"><use href="#cf"/></svg><svg class="i12"><use href="#cf"/></svg><svg class="i12"><use href="#cf"/></svg><svg class="i12"><use href="#cf"/></svg><svg class="i12"><use href="#cf2"/></svg><svg class="i12"><use href="#cf2"/></svg><svg class="i12"><use href="#cf3"/></svg></div></div><div class="cap">Configurations</div></div>
 <div class="rg"><div class="rbody">
   <button class="big w46"><svg class="i22"><use href="#nw"/></svg>New<br>Window</button><button class="big w46"><svg class="i22"><use href="#nfw"/></svg>New Floating<br>Window</button><button class="big wfl"><svg class="i22"><use href="#fw"/></svg>Float<br>Window</button><button class="big wfl sep"><svg class="i22"><use href="#arr"/></svg>Arrange<svg class="dd mt-1"><use href="#dd"/></svg></button><button class="big flex-grow-1"><svg class="i22"><use href="#sw"/></svg>Switch<br><span class="d-flex align-items-center gap-1">Windows<svg class="dd m-0"><use href="#dd"/></svg></span></button></div><div class="cap">Window</div></div>
</section>

<div class="d-flex flex-grow-1 min0">
 <main class="d-flex flex-column flex-grow-1 min0">
  <div class="prompt d-flex flex-shrink-0"><div class="tag d-flex align-items-center justify-content-center"><svg width="16" height="8" viewBox="0 0 16 8"><path d="M.5.500h15v7H.5z" fill="#4c93a3" stroke="#b5d5dc"/><path d="M2 4.500h12" stroke="#e4f0f2" stroke-dasharray="1.500 1" stroke-width="2"/></svg></div><span class="ptxt">Select geometry or features to edit, or click on 'Solids' commands to create 3D features.</span></div>
  <div class="doc-tabs d-flex flex-shrink-0 align-items-end">
   <button class="tb"><svg class="i12"><use href="#pdoc"/></svg>Part2<svg class="i10"><use href="#x"/></svg></button>
   <button class="tb on"><svg class="i12"><use href="#pdoc"/></svg>SPROCKET1.par<svg class="i10"><use href="#x"/></svg></button>
   <div class="ms-auto d-flex align-items-center gap-1 pe-1 align-self-center"><svg class="i10" viewBox="0 0 10 10"><path d="M7 2L3.500 5 7 8z" fill="none" stroke="#444"/></svg><svg class="i10" viewBox="0 0 10 10"><path d="M3 2l3.500 3L3 8z" fill="none" stroke="#444"/></svg><svg class="dd"><use href="#dd"/></svg><svg class="i10"><use href="#x"/></svg></div>
  </div>
  <div class="d-flex flex-grow-1 min0">
   <aside class="finder flex-shrink-0">
    <div class="finder-head d-flex align-items-center ps-1 pe-1 gap-1"><svg width="15" height="14" viewBox="0 0 15 14"><path d="M1 1h4v4h4v3H1zM3 8v4h8" fill="#e8e8e8" stroke="#245" stroke-width=".8"/><path d="M9.500 9.500h4v4h-4z" fill="#e8891e" stroke="#b9661a"/></svg><span class="me-auto">PathFinder</span><svg width="9" height="8"><use href="#cust"/></svg><svg width="8" height="8" class="ms-1"><use href="#x"/></svg><i></i></div>
    <ul class="tree list-unstyled m-0">
     <li class="root"><button class="s" aria-label="Collapse"><svg class="i10"><use href="#dn"/></svg></button><span class="s"><svg class="i12"><use href="#part"/></svg></span><span class="s"><svg class="i12"><use href="#lock"/></svg></span><span class="t">SPROCKET1.par</span></li>
     <li class="l1"><button class="s" aria-label="Collapse"><svg class="i10"><use href="#dn"/></svg></button><span class="band"><span class="s"><svg class="i12"><use href="#sk"/></svg></span><span class="t me-auto">Design</span><svg class="i12 me-1"><use href="#chk"/></svg></span></li>
     <li class="dim"><i class="s"></i><span class="s"><svg class="i12"><use href="#noeye"/></svg></span><span class="s"><svg class="i12"><use href="#ax"/></svg></span><span class="t">Base</span></li>
     <li><i class="s"></i><i class="s"></i><span class="s"><svg class="i12"><use href="#mat"/></svg></span><span class="t">Material (Steel)</span></li>
     <li class="dim"><button class="s" aria-label="Expand"><svg class="i10"><use href="#rt"/></svg></button><span class="s"><svg class="i12"><use href="#noeye"/></svg></span><span class="s"><svg class="i12"><use href="#pl"/></svg></span><span class="t">Base Reference Planes</span></li>
     <li><button class="s" aria-label="Expand"><svg class="i10"><use href="#rt"/></svg></button><span class="s"><svg class="i12"><use href="#eye"/></svg></span><span class="s"><svg class="i12"><use href="#bod"/></svg></span><span class="t">Design Bodies</span></li>
     <li class="dim"><button class="s" aria-label="Expand"><svg class="i10"><use href="#rt"/></svg></button><span class="s"><svg class="i12"><use href="#noeye"/></svg></span><span class="s"><svg class="i12"><use href="#cbod"/></svg></span><span class="t">Construction Bodies</span></li>
     <li><button class="s" aria-label="Collapse"><svg class="i10"><use href="#dn"/></svg></button><span class="band ord"><span class="t me-auto">Ordered</span><svg class="i12 me-1"><use href="#chk"/></svg></span></li>
     <li class="kid"><button class="s" aria-label="Expand"><svg class="i10"><use href="#rt"/></svg></button><i class="s"></i><span class="s"><svg class="i14"><use href="#prot"/></svg></span><span class="t">Base</span></li>
     <li class="kid dim"><button class="s" aria-label="Expand"><svg class="i10"><use href="#rt"/></svg></button><span class="s"><svg class="i12"><use href="#noeye"/></svg></span><span class="s"><svg class="i14"><use href="#ext"/></svg></span><span class="t">Extrude 1</span></li>
     <li class="kid"><button class="s" aria-label="Expand"><svg class="i10"><use href="#rt"/></svg></button><i class="s"></i><span class="s"><svg class="i14"><use href="#cut"/></svg></span><span class="t">Cutout 5</span></li>
     <li class="kid"><button class="s" aria-label="Expand"><svg class="i10"><use href="#rt"/></svg></button><i class="s"></i><span class="s"><svg class="i14"><use href="#pat"/></svg></span><span class="t">Pattern 1</span></li>
     <li class="kid"><button class="s" aria-label="Expand"><svg class="i10"><use href="#rt"/></svg></button><i class="s"></i><span class="s"><svg class="i14"><use href="#cut"/></svg></span><span class="t">Cutout 30</span></li>
     <li class="l1"><button class="s" aria-label="Collapse"><svg class="i10"><use href="#dn"/></svg></button><span class="band grey"><span class="s"><svg class="i12"><use href="#simp"/></svg></span><span class="t">Simplify</span></span></li>
     <li class="dim"><i class="s"></i><i class="s"></i><span class="s"><svg class="i14"><use href="#prot"/></svg></span><span class="t">Protrusion 4</span></li>
     <li class="dim"><i class="s"></i><i class="s"></i><span class="s"><svg class="i14"><use href="#cut"/></svg></span><span class="t">Cutout 31</span></li>
    </ul>
   </aside>
   <div class="view-area flex-grow-1">
    <svg width="100%" height="100%" viewBox="232 162 1025 508" role="img" aria-label="Sprocket model">
     <g id="depth" fill="#363636" fill-rule="evenodd"></g>
     <path id="back" fill="#363636" stroke="#1a1a1a" stroke-width=".8" fill-rule="evenodd"/>
     <path id="edges" stroke="#1a1a1a" stroke-width=".8" fill="none"/>
     <path id="face" fill="#484848" stroke="#1e1e1e" stroke-width=".8" fill-rule="evenodd"/>
     <path d="M617 395.500h12" stroke="#ccc" stroke-dasharray="2 1"/>
     <path d="M634 419l1 13 4-3 4 7 2-1-3-7 4-1zM643 435l5-5 3 2-5 5z" fill="#999" fill-opacity=".3" stroke="#b5b5b5" stroke-width=".8"/>
     <g stroke="#b9b9bd" stroke-width=".7">
      <path d="M1184 587l33 20-18 39-31-22z" fill="#fefefe"/><path d="M1184 587l24 4 29 19-20-3z" fill="#fcfcfc"/><path d="M1217 607l20 3-17 34-21 2z" fill="#e9e9ea"/>
      <path d="M1202 616l8-17m-6-2h10" stroke="#7a74c4"/><path d="M1202 616l10 1" stroke="#d66"/><path d="M1202 616l-14-7" stroke="#9d9"/><circle cx="1202" cy="616" r="1.500" fill="#db3" stroke="none"/></g>
     <g fill="#444" font-family="Open Sans"><text x="1181" y="615" font-size="9" transform="rotate(27 1181 615)">LEFT</text><text x="1209" y="631" font-size="6" transform="rotate(-5 1209 631)" font-style="italic">FRONT</text></g>
    </svg>
   </div>
  </div>
 </main>
 <aside class="dock flex-shrink-0 d-flex flex-column">
  <button aria-label="Library"><svg class="i16"><use href="#d1"/></svg></button><button aria-label="Families"><svg class="i16"><use href="#d2"/></svg></button><button aria-label="Select"><svg class="i16"><use href="#d3"/></svg></button><button aria-label="Sensors"><svg class="i16"><use href="#d4"/></svg></button><button class="mb-5"><svg class="i16"><use href="#d5"/></svg><span>Style Palette</span></button>
  <button aria-label="Simulation"><svg class="i16"><use href="#d6"/></svg></button><button aria-label="Tools"><svg class="i16"><use href="#d7"/></svg></button><button aria-label="Layers"><svg class="i16"><use href="#d8"/></svg></button><button aria-label="Groups"><svg class="i16"><use href="#d9"/></svg></button><button aria-label="Engineering"><svg class="i16"><use href="#d10"/></svg></button>
 </aside>
</div>

<footer class="status d-flex align-items-center flex-shrink-0 justify-content-end pe-1">
 <span class="stxt">0 items are selected</span>
 <div class="d-flex sicons"><svg class="i12"><use href="#pv"/></svg><svg class="i12"><use href="#zmw"/></svg><svg class="i12"><use href="#fits"/></svg><svg class="i12"><use href="#pan"/></svg><svg class="i12"><use href="#pv"/></svg><svg class="i12"><use href="#look"/></svg><svg class="i12"><use href="#v1"/></svg><svg class="i12"><use href="#bod"/></svg></div>
 <svg class="i12" viewBox="0 0 12 12"><circle cx="6" cy="6" r="5.500" fill="#fff"/><path d="M3 6h6" stroke="#c98"/></svg>
 <input type="range" class="zoom" value="50" aria-label="Zoom">
 <svg class="i12" viewBox="0 0 12 12"><circle cx="6" cy="6" r="5.500" fill="#fff"/><path d="M3 6h6M6 3v6" stroke="#c98"/></svg>
 <div class="d-flex send"><svg class="i12" viewBox="0 0 12 12"><rect x="1" y="2" width="11" height="8" rx="1" fill="#c4101c"/><path d="M5 4l3.500 2L5 8z" fill="#fff"/></svg><svg class="i10" viewBox="0 0 10 10"><circle cx="5" cy="5" r="4.500" fill="#fff"/><circle cx="5" cy="5" r="2.300" fill="#8c1f2c"/></svg><svg class="i10" viewBox="0 0 10 10"><rect x=".5" y=".5" width="9" height="9" rx="1" fill="#fff"/><path d="M5 6.500V2.500M3.500 4L5 2.500 6.500 4M2.500 7.800h5" fill="none" stroke="#b45" stroke-width=".9"/></svg></div>
</footer>

<nav class="tasks d-flex flex-shrink-0">
 <button class="startb d-flex align-items-center justify-content-center" aria-label="Start"><svg class="i14" viewBox="0 0 14 14"><path d="M0 2l6-1v5.500H0zM7 1l7-1v6.500H7zM0 7.500h6V13l-6-1zM7 7.500h7V14l-7-1z" fill="#fff"/></svg></button>
 <label class="task-find d-flex align-items-center"><svg class="i14 ms-2 me-2"><use href="#mag"/></svg><input class="ms-1" type="text" placeholder="Type here to search" aria-label="Search"><svg width="54" height="26" viewBox="0 0 54 26"><path d="M20 3c2 7 3 8 9 10-6 2-7 3-9 10-2-7-3-8-9-10 6-2 7-3 9-10z" fill="#f7c42c"/><path d="M39 11c1 4 2 4 5 5-3 1-4 1-5 5-1-4-2-4-5-5 3-1 4-1 5-5z" fill="#f8cd55"/><path d="M4 17v6M1 20h6" stroke="#2aa3d8" stroke-width="2.500"/><circle cx="34" cy="5" r="2" fill="#d3653d"/><circle cx="49" cy="21" r="2" fill="#7fc35d"/></svg></label>
 <div class="apps d-flex justify-content-between">
  <button aria-label="Task view"><svg class="i14" viewBox="0 0 14 14"><path d="M1 1v2h8V1M1 13v-2h8v2M1 5h8v4H1zM12.500 1v3M12.500 6v2M12.500 9v4" fill="none" stroke="#eee"/></svg></button>
  <button aria-label="Copilot"><svg width="20" height="20" viewBox="0 0 20 20"><path d="M6 1h7c-2 2-3 11-5 14H4c-3 0-3-2-2-5l1.500-6C4 2 5 1 6 1z" fill="#2f9be0"/><path d="M6 1h5L8 7H2.700l.8-3C4 2 5 1 6 1z" fill="#3ec6b4"/><path d="M1.600 11H9l-1 4H4c-2.500 0-3-1.500-2.400-4z" fill="#f3c22e"/><path d="M10 1h3c2 0 2 2 2.500 4H12L9 15c-1 3-1.500 4-3 4h2c-2 0-2-2-2.500-4H8z" fill="#2a4fc0"/><path d="M12 5h4c3 0 3 2 2 5l-1.500 6c-.5 2-1.500 3-2.500 3H7c2-2 3-11 5-14z" fill="#c65ac8"/><path d="M10 12h7.500l-1 4c-.5 2-1.500 3-2.500 3H7c1.500-1 2-4 3-7z" fill="#f0786e"/></svg></button>
  <button aria-label="Edge"><svg width="20" height="20" viewBox="0 0 20 20"><circle cx="10" cy="10" r="9.500" fill="#1769c0"/><path d="M.5 10C1 3 5 .5 10 .5c6 0 9.500 4 9.500 8 0 3-2 5-5 5-2 0-3-1-3-2 1-1 1-4-3-5-4 0-7 1-8 3.500z" fill="#3fcf9c"/><path d="M.5 10c2-5 10-5 11-1 0 1-1 2-1 3 1 2 4 3 7 2-3 5-13 6-13-2 0-3 2-4 3-4-3-1-6 0-7 2z" fill="#35b7e8"/></svg></button>
  <button aria-label="Chrome"><svg width="20" height="20" viewBox="0 0 20 20"><circle cx="10" cy="10" r="9.500" fill="#e03c31"/><path d="M2 5l5 8 4 6.500C3 20-2 12 2 5z" fill="#2fa24c"/><path d="M19 6.500C21 13 17 19 10.500 19.500L14 12l-1-5.500z" fill="#fbc116"/><circle cx="10" cy="10" r="4.700" fill="#fff"/><circle cx="10" cy="10" r="3.600" fill="#3b7ded"/><circle cx="15.500" cy="15" r="4" fill="#345"/><path d="M12 17c2-3 5-3 7 0l-3 2.500z" fill="#eee"/></svg></button>
  <button class="open" aria-label="File Explorer"><svg width="20" height="18" viewBox="0 0 20 18"><path d="M1 1h7l2 2h9v14H1z" fill="#e8ae36"/><path d="M1 5h18v12H1z" fill="#fbd874"/><path d="M4 10h12v7h-3v-3H7v3H4z" fill="#4a99d0"/></svg></button>
  <button aria-label="Store"><svg width="20" height="20" viewBox="0 0 20 20"><path d="M6 5V2h8v3" fill="none" stroke="#3aa0e0" stroke-width="1.500"/><rect y="4" width="20" height="16" rx="2" fill="#f4f4f4"/><path d="M6 7.500h3.700v3.700H6z" fill="#e74a2d"/><path d="M10.300 7.500H14v3.700h-3.700z" fill="#7cb526"/><path d="M6 11.800h3.700v3.700H6z" fill="#2199e0"/><path d="M10.300 11.800H14v3.700h-3.700z" fill="#fbb70c"/></svg></button>
  <button aria-label="Outlook"><svg width="20" height="20" viewBox="0 0 20 20"><path d="M3 6l8-5 9 6v10l-2 2H5l-2-2z" fill="#1378c8"/><path d="M10 5l8-2v7l-6 5z" fill="#45b6f0"/><path d="M4 18L20 8v9l-2 2z" fill="#2d9ce0"/><rect y="6" width="10" height="10" rx="1" fill="#0b56a4"/><circle cx="5" cy="11" r="2.600" fill="none" stroke="#fff" stroke-width="1.500"/></svg></button>
  <button aria-label="Remote"><svg width="20" height="20" viewBox="0 0 20 20"><path d="M1 1l16-1 2 11-15 2z" fill="#c9d3dc"/><path d="M2 3l14-1 1.500 8L5 11z" fill="#2850a8"/><path d="M5 6l9-1" stroke="#cfe" stroke-width="2"/><path d="M7 13l9-1 2 4-6 3-6-2z" fill="#d8d8d8"/></svg></button>
  <button aria-label="WhatsApp"><svg width="22" height="22" viewBox="0 0 22 22"><path d="M1.500 20.500l1.500-5a9 9 0 113.500 3.500z" fill="none" stroke="#4bd06c" stroke-width="1.900"/><path d="M7 6.500c1-1 2 0 2.500 1.500 0 1-1 1-.5 2s2 2.500 3 2.500 1-1 2-.5c2 1 1.500 1.500.5 2.500-3 2-10-5-7.500-8z" fill="#4bd06c"/></svg><span class="ct">1</span></button>
  <button aria-label="Viewer"><svg width="20" height="20" viewBox="0 0 20 20"><path d="M0 0h20v20H0z" fill="#f5f5f5"/><path d="M3 3h14v14H3z" fill="#c9d4d8"/><path d="M7 3h9v9H7z" fill="#2292cc"/><path d="M3 3h4v13H3z" fill="#9fb4bd"/></svg></button>
  <button class="open cur" aria-label="Solid Edge"><svg width="20" height="20" viewBox="0 0 20 20"><path d="M0 3h3v14h14v3H0z" fill="#1d8aa0"/><path d="M2 0h18v18H2z" fill="#2c47a6"/><text x="5" y="13" font-family="Liberation Sans" font-weight="bold" font-size="9" fill="#fff">SE</text></svg></button>
  <button class="open" aria-label="PowerPoint"><svg width="20" height="18" viewBox="0 0 20 18"><path d="M9 2h10v14H9z" fill="#fff" stroke="#c33e26"/><path d="M12 6h5M12 9h5M12 12h5" stroke="#c33e26"/><path d="M1 2l11-2v18L1 16z" fill="#c43a20"/><text x="3" y="13" font-family="Liberation Sans" font-weight="bold" font-size="10" fill="#fff">P</text></svg></button>
  <button class="open" aria-label="OBS"><svg width="20" height="20" viewBox="0 0 20 20"><circle cx="10" cy="10" r="9" fill="#262626" stroke="#ddd"/><path d="M9 3c4 1 3 5 0 6M4 13c-1-4 3-5 6-3M16 8c-1 4-4 4-6 2" fill="none" stroke="#ddd" stroke-width="1.500"/><circle cx="15" cy="14" r="5" fill="#e01414"/></svg></button>
  <button class="open" aria-label="Notepad"><svg width="20" height="18" viewBox="0 0 20 18"><path d="M5 1h13l-3 15H1z" fill="#86bcc4"/><path d="M15 16l3-15 1 14z" fill="#eee"/><path d="M5 1h13v2H5z" fill="#cde"/></svg></button>
 </div>
 <div class="ms-auto d-flex align-items-center">
  <button class="wx d-flex align-items-center text-nowrap"><svg width="22" height="18" viewBox="0 0 22 18"><path d="M1 4h19v12H1z" fill="none" stroke="#eee" stroke-width="1.500"/><path d="M4 7h6M4 9.500h5v3.500H4zM12 10h6M12 13h6" fill="none" stroke="#eee" stroke-width="1.500"/><circle cx="16" cy="5" r="5" fill="#c4262e"/><text x="14" y="8" font-size="7" fill="#fff">6</text></svg><span>23°C</span><span>Partly cloudy</span></button>
  <div class="tray d-flex align-items-center"><svg class="i12" viewBox="0 0 12 12"><path d="M1 8.500l5-5 5 5" fill="none" stroke="#eee" stroke-width="1.200"/></svg><svg class="i12" viewBox="0 0 12 12"><path d="M2 4h6v5H2zM8 5.500l3-1v4l-3-1M3 2c2-1.500 4-1.500 6 0M3 11c2 1 4 1 6 0" fill="none" stroke="#ddd"/></svg><svg class="i14" viewBox="0 0 14 14"><rect x="4" width="6" height="9" rx="2" fill="#fff"/><path d="M3 8c0 4 8 4 8 0M7 11v3" fill="none" stroke="#fff"/></svg><svg class="i14" viewBox="0 0 14 14"><circle cx="7" cy="7" r="6" fill="none" stroke="#eee"/><path d="M1 7h12M7 1c-4 4-4 8 0 12M7 1c4 4 4 8 0 12M2 4h10M2 10h6" fill="none" stroke="#eee" stroke-width=".8"/><circle cx="11" cy="11" r="2.500" fill="#333" stroke="#eee"/></svg><svg class="i14" viewBox="0 0 14 14"><path d="M1 5h2l3-3v10L3 9H1zM8 5c1 1 1 3 0 4M10 3.500c2 2 2 5 0 7M12 2c2.500 3 2.500 7 0 10" fill="none" stroke="#ddd"/></svg><span>ENG</span></div>
  <div class="clock text-center">22:35<br>02-12-2025</div>
  <button class="note" aria-label="Notifications"><svg width="14" height="14" viewBox="0 0 14 14"><path d="M.5 1.500h13v9H10L7.500 13.500V10.500h-7z" fill="none" stroke="#ddd"/></svg></button>
  <div class="desk align-self-stretch"></div>
 </div>
</nav>
<script src="https://cdn.jsdelivr.net/npm/bootstrap@5.3.0/dist/js/bootstrap.bundle.min.js"></script>
<script>
// Sprocket outline: 25 teeth on an ellipse, extruded to the right by the plate thickness
const TEETH = 25, CX = 660, CY = 397, RX = 220, RY = 259, THICK = 8;
const pt = (a, r, t, dx) => {
  const u = r * Math.cos(a) - t * Math.sin(a), v = r * Math.sin(a) + t * Math.cos(a);
  return (CX + dx + RX * u - RY * v * 0.013).toFixed(1) + ' ' + (CY + RY * v).toFixed(1);
};
function outline(dx) {
  let d = '';
  for (let i = 0; i < TEETH; i++) {
    const a = -Math.PI / 2 + i * 2 * Math.PI / TEETH, p = (r, t) => pt(a, r, t, dx);
    d += (i ? 'L' : 'M') + p(.993, -.106) + 'L' + p(.886, -.060)
      + 'C' + p(.862, -.046) + ' ' + p(.853, -.024) + ' ' + p(.853, 0)
      + 'C' + p(.853, .024) + ' ' + p(.862, .046) + ' ' + p(.886, .060) + 'L' + p(.993, .106);
  }
  const x = CX + dx;
  return d + `ZM${x - 40} ${CY}a40 47 0 1 0 80 0a40 47 0 1 0 -80 0Z`;
}
let layers = '', edges = '';
for (let s = 1; s < THICK; s++) layers += `<path d="${outline(s)}"/>`;
for (let i = 0; i < TEETH; i++) {
  const a = -Math.PI / 2 + i * 2 * Math.PI / TEETH;
  for (const [r, t] of [[.886, -.06], [.886, .06], [.993, -.106], [.993, .106]]) edges += 'M' + pt(a, r, t, 0) + 'h' + THICK;
}
document.getElementById('depth').innerHTML = layers;
document.getElementById('back').setAttribute('d', outline(THICK));
document.getElementById('edges').setAttribute('d', edges);
document.getElementById('face').setAttribute('d', outline(0));
</script>
</body>
</html>
